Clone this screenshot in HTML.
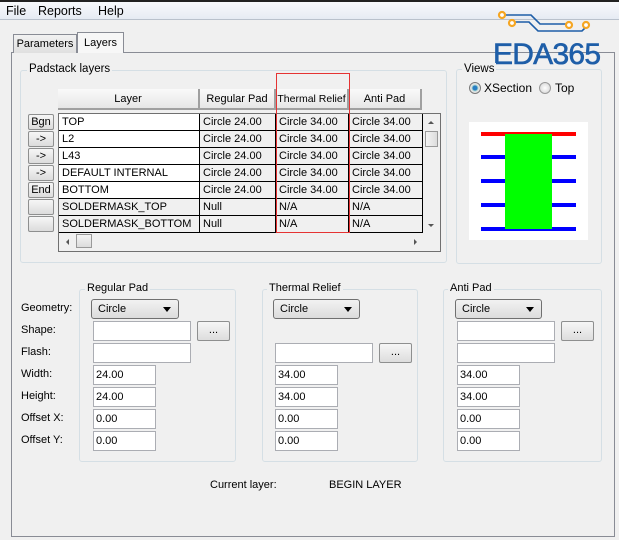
<!DOCTYPE html>
<html><head><meta charset="utf-8"><style>
*{box-sizing:border-box;margin:0;padding:0}
body{width:619px;height:540px;background:#f0f0f0;font-family:"Liberation Sans",sans-serif;font-size:11px;color:#000;position:relative;overflow:hidden}
.a{position:absolute;white-space:nowrap}
.grp{position:absolute;border:1px solid #d5dfe5;border-radius:3px}
.lbl{position:absolute;background:#f0f0f0;padding:0 2px;line-height:13px;white-space:nowrap}
.btn{position:absolute;border:1px solid #8e8f8f;border-radius:2px;background:linear-gradient(#f6f6f6,#dddddd);text-align:center;line-height:17px}
.hb{position:absolute;background:linear-gradient(#fafafa,#e6e6e6);border-right:2px solid #a0a0a0;border-bottom:2px solid #a0a0a0;text-align:center;line-height:20px;height:21px;white-space:nowrap;overflow:hidden}
.inp{position:absolute;background:#fff;border:1px solid #abadb3;height:20px;line-height:18px;padding-left:2px}
.cmb{position:absolute;border:1px solid #707070;border-radius:3px;background:linear-gradient(#f2f2f2,#dcdcdc);height:20px;line-height:18px;padding-left:6px}
.cmb:after{content:"";position:absolute;right:7px;top:7px;border-left:4px solid transparent;border-right:4px solid transparent;border-top:5px solid #000}
.cell{position:absolute;height:17px;line-height:17px;padding-left:3px;border-right:1px solid #000;border-bottom:1px solid #000;white-space:nowrap;overflow:hidden}
.sb{position:absolute;border:1px solid #8e8f8f;border-radius:2px;background:linear-gradient(#f6f6f6,#dcdcdc);width:26px;height:16px;text-align:center;line-height:14px}
</style></head><body>
<div class="a" style="left:0;top:0;width:619px;height:2px;background:#222"></div>
<div class="a" style="left:0;top:2px;width:619px;height:18px;background:linear-gradient(#f8f9fc,#e6ebf3);border-bottom:1px solid #b9c1cc"></div>
<div class="a" style="left:6px;top:4px;font-size:12.5px">File</div>
<div class="a" style="left:38px;top:4px;font-size:12.5px">Reports</div>
<div class="a" style="left:98px;top:4px;font-size:12.5px">Help</div>

<div class="a" style="left:11px;top:52px;width:604px;height:485px;border:1px solid #898c95"></div>
<div class="a" style="left:13px;top:34px;width:64px;height:19px;border:1px solid #898c95;border-bottom:none;background:linear-gradient(#f2f2f2,#e0e0e0);text-align:center;line-height:18px">Parameters</div>
<div class="a" style="left:77px;top:32px;width:47px;height:21px;border:1px solid #898c95;border-bottom:none;background:#f7f7f7;text-align:center;line-height:20px">Layers</div>

<svg class="a" style="left:480px;top:0" width="139" height="70">
<g fill="none" stroke="#1e5ea8" stroke-width="1.6">
<path d="M25 15 H51 L60 24 H86"/><path d="M35 22 H49 L58 31 H102 L106 27"/></g>
<g fill="#fff" stroke="#f5a623" stroke-width="2.2">
<circle cx="22" cy="15" r="3"/><circle cx="32" cy="23" r="3"/><circle cx="89" cy="25" r="3"/><circle cx="106" cy="25" r="3"/></g>
<text x="13" y="64" font-family="Liberation Sans" font-size="30" fill="#1e5ea8" stroke="#1e5ea8" stroke-width="0.6" textLength="108">EDA365</text>
</svg>

<div class="grp" style="left:20px;top:70px;width:427px;height:193px"></div>
<div class="lbl" style="left:27px;top:63px;font-size:11.5px">Padstack layers</div>
<div class="hb" style="left:58px;top:89px;width:142px">Layer</div>
<div class="hb" style="left:200px;top:89px;width:76px">Regular Pad</div>
<div class="hb" style="left:276px;top:89px;width:73px;font-size:10.5px">Thermal Relief</div>
<div class="hb" style="left:349px;top:89px;width:73px">Anti Pad</div>

<div class="a" style="left:58px;top:113px;width:383px;height:139px;border:1px solid #707070;background:#f0f0f0"></div>
<div class="cell" style="left:59px;top:114px;width:141px;background:#fff">TOP</div>
<div class="cell" style="left:200px;top:114px;width:76px">Circle 24.00</div>
<div class="cell" style="left:276px;top:114px;width:73px">Circle 34.00</div>
<div class="cell" style="left:349px;top:114px;width:74px">Circle 34.00</div>
<div class="cell" style="left:59px;top:131px;width:141px;background:#fff">L2</div>
<div class="cell" style="left:200px;top:131px;width:76px">Circle 24.00</div>
<div class="cell" style="left:276px;top:131px;width:73px">Circle 34.00</div>
<div class="cell" style="left:349px;top:131px;width:74px">Circle 34.00</div>
<div class="cell" style="left:59px;top:148px;width:141px;background:#fff">L43</div>
<div class="cell" style="left:200px;top:148px;width:76px">Circle 24.00</div>
<div class="cell" style="left:276px;top:148px;width:73px">Circle 34.00</div>
<div class="cell" style="left:349px;top:148px;width:74px">Circle 34.00</div>
<div class="cell" style="left:59px;top:165px;width:141px;background:#fff">DEFAULT INTERNAL</div>
<div class="cell" style="left:200px;top:165px;width:76px">Circle 24.00</div>
<div class="cell" style="left:276px;top:165px;width:73px">Circle 34.00</div>
<div class="cell" style="left:349px;top:165px;width:74px">Circle 34.00</div>
<div class="cell" style="left:59px;top:182px;width:141px;background:#fff">BOTTOM</div>
<div class="cell" style="left:200px;top:182px;width:76px">Circle 24.00</div>
<div class="cell" style="left:276px;top:182px;width:73px">Circle 34.00</div>
<div class="cell" style="left:349px;top:182px;width:74px">Circle 34.00</div>
<div class="cell" style="left:59px;top:199px;width:141px">SOLDERMASK_TOP</div>
<div class="cell" style="left:200px;top:199px;width:76px">Null</div>
<div class="cell" style="left:276px;top:199px;width:73px">N/A</div>
<div class="cell" style="left:349px;top:199px;width:74px">N/A</div>
<div class="cell" style="left:59px;top:216px;width:141px">SOLDERMASK_BOTTOM</div>
<div class="cell" style="left:200px;top:216px;width:76px">Null</div>
<div class="cell" style="left:276px;top:216px;width:73px">N/A</div>
<div class="cell" style="left:349px;top:216px;width:74px">N/A</div>
<div class="a" style="left:424px;top:114px;width:16px;height:118px;background:#f0f0f0"></div>
<div class="a" style="left:428px;top:121px;border-left:3px solid transparent;border-right:3px solid transparent;border-bottom:3px solid #555"></div>
<div class="a" style="left:425px;top:131px;width:13px;height:16px;border:1px solid #999;background:linear-gradient(90deg,#f4f4f4,#dcdcdc)"></div>
<div class="a" style="left:428px;top:224px;border-left:3px solid transparent;border-right:3px solid transparent;border-top:3px solid #555"></div>
<div class="a" style="left:66px;top:239px;border-top:3px solid transparent;border-bottom:3px solid transparent;border-right:3px solid #555"></div>
<div class="a" style="left:76px;top:234px;width:16px;height:14px;border:1px solid #999;background:linear-gradient(#f4f4f4,#dcdcdc)"></div>
<div class="a" style="left:414px;top:239px;border-top:3px solid transparent;border-bottom:3px solid transparent;border-left:3px solid #555"></div>
<div class="sb" style="left:28px;top:114px">Bgn</div>
<div class="sb" style="left:28px;top:131px">-&gt;</div>
<div class="sb" style="left:28px;top:148px">-&gt;</div>
<div class="sb" style="left:28px;top:165px">-&gt;</div>
<div class="sb" style="left:28px;top:182px">End</div>
<div class="sb" style="left:28px;top:199px"></div>
<div class="sb" style="left:28px;top:216px"></div>
<div class="a" style="left:276px;top:73px;width:74px;height:160px;border:1px solid #e53333"></div>

<div class="grp" style="left:456px;top:69px;width:146px;height:195px"></div>
<div class="lbl" style="left:462px;top:63px;font-size:11.5px">Views</div>
<div class="a" style="left:469px;top:82px;width:12px;height:12px;border-radius:50%;border:1px solid #7a7a7a;background:radial-gradient(#2a7fc4 30%,#9cc 40%,#e6e6e6 55%)"></div>
<div class="a" style="left:484px;top:81px;font-size:12px">XSection</div>
<div class="a" style="left:539px;top:82px;width:12px;height:12px;border-radius:50%;border:1px solid #999;background:radial-gradient(#fff,#d0d0d0)"></div>
<div class="a" style="left:555px;top:81px;font-size:12px">Top</div>
<svg class="a" style="left:469px;top:122px" width="119" height="118">
<rect width="119" height="118" fill="#fff"/>
<rect x="12" y="10" width="95" height="4" fill="#f00"/>
<g fill="#00f"><rect x="12" y="33" width="95" height="4"/><rect x="12" y="57" width="95" height="4"/><rect x="12" y="81" width="95" height="4"/><rect x="12" y="105" width="95" height="4"/></g>
<rect x="36" y="12" width="47" height="95" fill="#0f0"/>
</svg>

<div class="a" style="left:21px;top:302px">Geometry:</div>
<div class="a" style="left:21px;top:324px">Shape:</div>
<div class="a" style="left:21px;top:346px">Flash:</div>
<div class="a" style="left:21px;top:368px">Width:</div>
<div class="a" style="left:21px;top:390px">Height:</div>
<div class="a" style="left:21px;top:412px">Offset X:</div>
<div class="a" style="left:21px;top:434px">Offset Y:</div>

<div class="grp" style="left:79px;top:289px;width:157px;height:173px"></div>
<div class="lbl" style="left:85px;top:282px">Regular Pad</div>
<div class="cmb" style="left:91px;top:299px;width:88px">Circle</div>
<div class="inp" style="left:93px;top:321px;width:98px"></div>
<div class="btn" style="left:197px;top:321px;width:33px;height:20px">...</div>
<div class="inp" style="left:93px;top:343px;width:98px"></div>
<div class="inp" style="left:93px;top:365px;width:63px">24.00</div>
<div class="inp" style="left:93px;top:387px;width:63px">24.00</div>
<div class="inp" style="left:93px;top:409px;width:63px">0.00</div>
<div class="inp" style="left:93px;top:431px;width:63px">0.00</div>

<div class="grp" style="left:262px;top:289px;width:156px;height:173px"></div>
<div class="lbl" style="left:267px;top:282px">Thermal Relief</div>
<div class="cmb" style="left:273px;top:299px;width:87px">Circle</div>
<div class="inp" style="left:275px;top:343px;width:98px"></div>
<div class="btn" style="left:379px;top:343px;width:33px;height:20px">...</div>
<div class="inp" style="left:275px;top:365px;width:63px">34.00</div>
<div class="inp" style="left:275px;top:387px;width:63px">34.00</div>
<div class="inp" style="left:275px;top:409px;width:63px">0.00</div>
<div class="inp" style="left:275px;top:431px;width:63px">0.00</div>

<div class="grp" style="left:443px;top:289px;width:159px;height:173px"></div>
<div class="lbl" style="left:448px;top:282px">Anti Pad</div>
<div class="cmb" style="left:455px;top:299px;width:87px">Circle</div>
<div class="inp" style="left:457px;top:321px;width:98px"></div>
<div class="btn" style="left:561px;top:321px;width:33px;height:20px">...</div>
<div class="inp" style="left:457px;top:343px;width:98px"></div>
<div class="inp" style="left:457px;top:365px;width:63px">34.00</div>
<div class="inp" style="left:457px;top:387px;width:63px">34.00</div>
<div class="inp" style="left:457px;top:409px;width:63px">0.00</div>
<div class="inp" style="left:457px;top:431px;width:63px">0.00</div>

<div class="a" style="left:210px;top:479px">Current layer:</div>
<div class="a" style="left:329px;top:479px">BEGIN LAYER</div>
</body></html>
